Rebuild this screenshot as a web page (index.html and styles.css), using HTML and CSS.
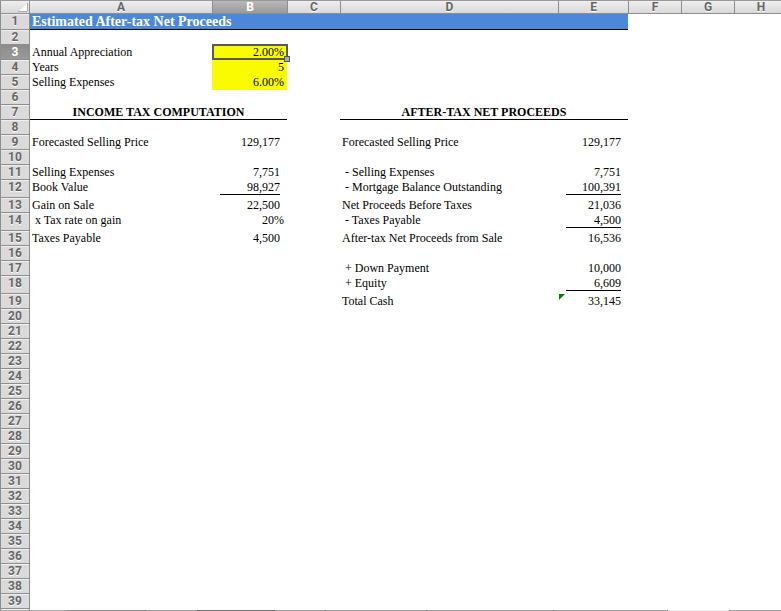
FILE: index.html
```html
<!DOCTYPE html>
<html lang="en">

<head>
    <meta charset="UTF-8">
    <meta name="viewport" content="width=device-width, initial-scale=1.0">
    <title>Estimated After-tax Net Proceeds</title>
    <link rel="stylesheet" href="styles.css">
</head>

<body>
    <div class="workbook">
        <div class="grid">
            <table class="sheet">
                <colgroup>
                    <col class="col-head">
                    <col class="col-a">
                    <col class="col-b">
                    <col class="col-c">
                    <col class="col-d">
                    <col class="col-e">
                    <col class="col-c">
                    <col class="col-c">
                    <col class="col-c">
                </colgroup>
                <thead>
                    <tr>
                        <td class="corner"><svg width="10" height="9" viewBox="0 0 10 9"><path d="M10 0V9H0Z" fill="#fff"/><path d="M0 8.5H9.5V0" fill="none" stroke="#aaa"/></svg></td>
                        <th scope="col">A</th>
                        <th scope="col" class="active">B</th>
                        <th scope="col">C</th>
                        <th scope="col">D</th>
                        <th scope="col">E</th>
                        <th scope="col">F</th>
                        <th scope="col">G</th>
                        <th scope="col">H</th>
                    </tr>
                </thead>
                <tbody>
                    <tr class="title-row"><th scope="row">1</th><td colspan="5" class="title">Estimated After-tax Net Proceeds</td><td colspan="3"></td></tr>
                    <tr><th scope="row">2</th><td colspan="8"></td></tr>
                    <tr><th scope="row" class="active">3</th><td>Annual Appreciation</td><td class="entry selected">2.00%<span class="handle"></span></td><td colspan="6"></td></tr>
                    <tr><th scope="row">4</th><td>Years</td><td class="entry">5</td><td colspan="6"></td></tr>
                    <tr><th scope="row">5</th><td>Selling Expenses</td><td class="entry">6.00%</td><td colspan="6"></td></tr>
                    <tr><th scope="row">6</th><td colspan="8"></td></tr>
                    <tr><th scope="row">7</th><td colspan="2" class="section">INCOME TAX COMPUTATION</td><td></td><td colspan="2" class="section">AFTER-TAX NET PROCEEDS</td><td colspan="3"></td></tr>
                    <tr><th scope="row">8</th><td colspan="8"></td></tr>
                    <tr><th scope="row">9</th><td>Forecasted Selling Price</td><td class="num">129,177</td><td></td><td>Forecasted Selling Price</td><td class="num">129,177</td><td colspan="3"></td></tr>
                    <tr><th scope="row">10</th><td colspan="8"></td></tr>
                    <tr><th scope="row">11</th><td>Selling Expenses</td><td class="num">7,751</td><td></td><td class="sub">- Selling Expenses</td><td class="num">7,751</td><td colspan="3"></td></tr>
                    <tr class="tall"><th scope="row">12</th><td>Book Value</td><td class="num"><span class="sum">98,927</span></td><td></td><td class="sub">- Mortgage Balance Outstanding</td><td class="num"><span class="sum">100,391</span></td><td colspan="3"></td></tr>
                    <tr><th scope="row">13</th><td>Gain on Sale</td><td class="num">22,500</td><td></td><td>Net Proceeds Before Taxes</td><td class="num">21,036</td><td colspan="3"></td></tr>
                    <tr class="tall"><th scope="row">14</th><td class="sub">x Tax rate on gain</td><td class="pct">20%</td><td></td><td class="sub">- Taxes Payable</td><td class="num"><span class="sum">4,500</span></td><td colspan="3"></td></tr>
                    <tr><th scope="row">15</th><td>Taxes Payable</td><td class="num">4,500</td><td></td><td>After-tax Net Proceeds from Sale</td><td class="num">16,536</td><td colspan="3"></td></tr>
                    <tr><th scope="row">16</th><td colspan="8"></td></tr>
                    <tr><th scope="row">17</th><td></td><td></td><td></td><td class="sub">+ Down Payment</td><td class="num">10,000</td><td colspan="3"></td></tr>
                    <tr class="tall"><th scope="row">18</th><td></td><td></td><td></td><td class="sub">+ Equity</td><td class="num"><span class="sum">6,609</span></td><td colspan="3"></td></tr>
                    <tr><th scope="row">19</th><td></td><td></td><td></td><td>Total Cash</td><td class="num flagged">33,145</td><td colspan="3"></td></tr>
                    <tr><th scope="row">20</th><td colspan="8"></td></tr>
                    <tr><th scope="row">21</th><td colspan="8"></td></tr>
                    <tr><th scope="row">22</th><td colspan="8"></td></tr>
                    <tr><th scope="row">23</th><td colspan="8"></td></tr>
                    <tr><th scope="row">24</th><td colspan="8"></td></tr>
                    <tr><th scope="row">25</th><td colspan="8"></td></tr>
                    <tr><th scope="row">26</th><td colspan="8"></td></tr>
                    <tr><th scope="row">27</th><td colspan="8"></td></tr>
                    <tr><th scope="row">28</th><td colspan="8"></td></tr>
                    <tr><th scope="row">29</th><td colspan="8"></td></tr>
                    <tr><th scope="row">30</th><td colspan="8"></td></tr>
                    <tr><th scope="row">31</th><td colspan="8"></td></tr>
                    <tr><th scope="row">32</th><td colspan="8"></td></tr>
                    <tr><th scope="row">33</th><td colspan="8"></td></tr>
                    <tr><th scope="row">34</th><td colspan="8"></td></tr>
                    <tr><th scope="row">35</th><td colspan="8"></td></tr>
                    <tr><th scope="row">36</th><td colspan="8"></td></tr>
                    <tr><th scope="row">37</th><td colspan="8"></td></tr>
                    <tr><th scope="row">38</th><td colspan="8"></td></tr>
                    <tr><th scope="row">39</th><td colspan="8"></td></tr>
                    <tr><th></th><td colspan="8"></td></tr>
                </tbody>
            </table>
        </div>
        <div class="tab-edge"></div>
    </div>
</body>

</html>
```

FILE: styles.css
```css
body {
    margin: 0;
    background-color: #fff;
    color: #000;
    font-family: "Liberation Serif", "Times New Roman", serif;
    font-size: 12px;
}

.workbook {
    display: flex;
    flex-direction: column;
    height: 100vh;
}

.grid {
    flex: 1;
    min-height: 0;
    overflow: hidden;
}

.sheet {
    width: 787px;
    table-layout: fixed;
    border-collapse: separate;
    border-spacing: 0;
}

.col-head { width: 30px; }
.col-a { width: 182px; }
.col-b { width: 75px; }
.col-c { width: 53px; }
.col-d { width: 218px; }
.col-e { width: 70px; }

.sheet th,
.sheet td {
    box-sizing: border-box;
    height: 15px;
    padding: 0 2px;
    line-height: 14px;
    vertical-align: top;
    text-align: left;
    white-space: nowrap;
}

.sheet .tall th,
.sheet .tall td {
    height: 18px;
}

.sheet .title-row th,
.sheet .title-row td {
    height: 16px;
    line-height: 15px;
}

/* row and column headings */
.sheet th {
    padding: 0;
    border-bottom: 1px solid #8e8e8e;
    background-color: #dadada;
    color: #666;
    font: bold 12px/14px Roboto, "Lucida Grande", sans-serif;
    text-align: center;
    text-shadow: 0 1px 0 #fff;
}

.sheet tbody th {
    border-left: 1px solid #8e8e8e;
    border-right: 1px solid #8e8e8e;
    box-shadow: inset 0 1px 0 #f0f0f0;
}

.sheet thead th,
.sheet .corner {
    height: 14px;
    border-top: 1px solid #999;
    border-bottom: 1px solid #8e8e8e;
    background-image: linear-gradient(#efefef, #d8d8d8);
    line-height: 12px;
}

.sheet thead th + th {
    border-left: 1px solid #8e8e8e;
}

.sheet .corner {
    padding: 2px 1px 0 0;
    border-left: 1px solid #8e8e8e;
    border-right: 1px solid #8e8e8e;
}

.corner svg {
    display: block;
    margin-left: auto;
}

.sheet th.active {
    background-image: linear-gradient(#b8b8b8, #9a9a9a);
    box-shadow: none;
    color: #fff;
    text-shadow: none;
}

.sheet tbody th.active {
    background-image: linear-gradient(#8c8c8c, #999);
}

/* cells */
.sheet .title {
    border-bottom: 1px solid #000;
    background-color: #4c88d9;
    color: #fff;
    font-size: 14px;
    font-weight: bold;
}

.sheet .section {
    border-bottom: 1px solid #000;
    font-weight: bold;
    text-align: center;
}

.sheet .entry {
    padding-right: 3px;
    background-color: #fbfb00;
    text-align: right;
}

.selected,
.flagged {
    position: relative;
}

.selected::before {
    content: "";
    position: absolute;
    inset: -1px -1px 0 0;
    border: 2px solid #595959;
}

.handle {
    position: absolute;
    right: -3px;
    bottom: -2px;
    width: 4px;
    height: 4px;
    border: 1px solid #555;
    background-color: #aaa;
}

.sheet .sub {
    padding-left: 5px;
}

.sheet .num {
    padding: 0 7px 0 8px;
    text-align: right;
}

.sheet .pct {
    padding-right: 3px;
    text-align: right;
}

.sum {
    display: block;
    border-bottom: 1px solid #000;
}

.flagged::before {
    content: "";
    position: absolute;
    top: 0;
    left: 1px;
    border-top: 6px solid #008000;
    border-right: 6px solid transparent;
}

/* top edge of the sheet tabs */
.tab-edge {
    flex: none;
    height: 1px;
    background: linear-gradient(to right,
        #a8a8a8 67px, #8e8e8e 67px 145px, #666 145px 146px,
        #a0a0a0 146px 197px, #6e6e6e 197px 275px,
        #a0a0a0 275px 325px, #666 325px 326px,
        #a0a0a0 326px 426px, #666 426px 427px,
        #a0a0a0 427px 553px, #666 553px 554px,
        #a0a0a0 554px 667px, #666 667px 668px,
        #eee 668px 729px, #666 729px 730px, #a0a0a0 730px);
}
```
